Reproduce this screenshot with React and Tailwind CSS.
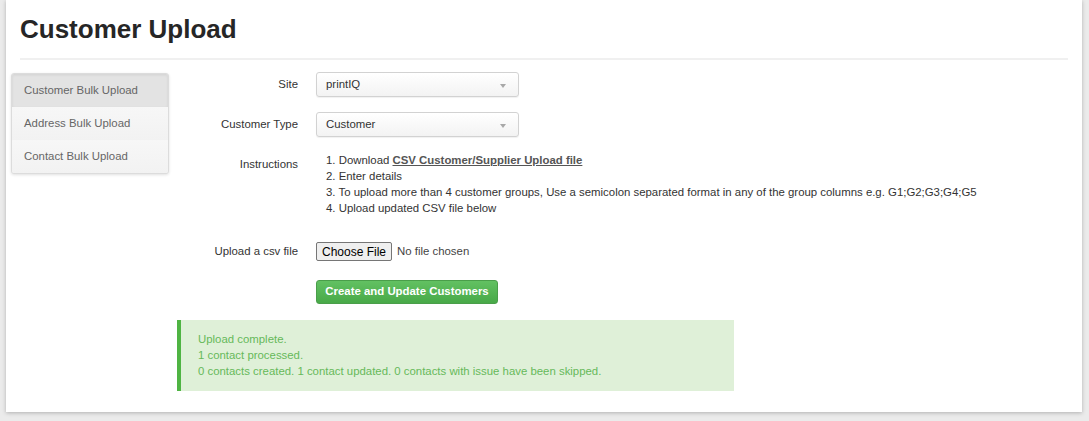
const Select = ({ value }) => (
  <div className="relative flex h-[25px] w-[203px] items-center rounded-[3px] border border-[#d2d2d2] bg-linear-to-b from-white to-[#f3f3f3] pl-[9px] shadow-[0_1px_1px_rgba(0,0,0,0.06)]">
    <span>{value}</span>
    <span className="absolute right-[12px] top-[11px] h-0 w-0 border-x-[3.5px] border-t-[4px] border-x-transparent border-t-[#a8a8a8]" />
  </div>
);

const Row = ({ label, children, labelClass = "", className = "" }) => (
  <div className={`flex ${className}`}>
    <div className={`w-[121px] shrink-0 text-right ${labelClass}`}>{label}</div>
    <div className="ml-[18px]">{children}</div>
  </div>
);

const SideNav = () => {
  const items = ["Customer Bulk Upload", "Address Bulk Upload", "Contact Bulk Upload"];
  return (
    <div className="mt-[1px] h-fit w-[158px] shrink-0 overflow-hidden rounded-[3px] border border-[#dcdcdc] bg-[#f5f5f5] shadow-[0_1px_3px_rgba(0,0,0,0.12)]">
      {items.map((item, i) => (
        <div
          key={item}
          className={`flex h-[33px] items-center pl-[12px] text-[#666] ${
            i === 0 ? "bg-[#e3e3e3] shadow-[inset_0_1px_3px_rgba(0,0,0,0.08)]" : "bg-linear-to-b from-[#f7f7f7] to-[#f2f2f2]"
          }`}
        >
          {item}
        </div>
      ))}
    </div>
  );
};

export default function App() {
  return (
    <div className="h-screen bg-[#ebebeb] px-[6px] font-['Liberation_Sans',Arial,sans-serif] text-[11.4px] text-[#333]">
      <div className="h-[412px] w-[1076px] bg-white shadow-[0_1px_4px_rgba(0,0,0,0.25)]">
        <div className="px-[14px] pt-[15px]">
          <h1 className="text-[26px] leading-[29px] font-bold text-[#262626]">Customer Upload</h1>
          <div className="mt-[14px] h-[2px] bg-[#f0f0f0]" />
        </div>

        <div className="mt-[12px] flex gap-[8px] pl-[5px]">
          <SideNav />

          <div className="flex flex-col">
            <Row label="Site" labelClass="pt-[4px]">
              <Select value="printIQ" />
            </Row>
            <Row label="Customer Type" labelClass="pt-[4px]" className="mt-[15px]">
              <Select value="Customer" />
            </Row>
            <Row label="Instructions" labelClass="pt-[4px]" className="mt-[15px]">
              <div className="pl-[10px] leading-[16px]">
                <div>
                  1. Download{" "}
                  <a href="#" className="font-bold text-[#555] underline">
                    CSV Customer/Supplier Upload file
                  </a>
                </div>
                <div>2. Enter details</div>
                <div>3. To upload more than 4 customer groups, Use a semicolon separated format in any of the group columns e.g. G1;G2;G3;G4;G5</div>
                <div>4. Upload updated CSV file below</div>
              </div>
            </Row>
            <Row label="Upload a csv file" labelClass="pt-[1px]" className="mt-[26px]">
              <div className="flex items-center">
                <button className="h-[19px] rounded-[2px] border border-[#767676] bg-[#efefef] px-[5px] text-[12px] leading-[16px] text-black">
                  Choose File
                </button>
                <span className="ml-[5px] text-[#444]">No file chosen</span>
              </div>
            </Row>
            <Row label="" className="mt-[19px]">
              <button className="h-[24px] w-[182px] rounded-[3px] border border-[#4a9e4a] bg-linear-to-b from-[#62c162] to-[#48a948] font-bold text-white">
                Create and Update Customers
              </button>
            </Row>

            <div className="mt-[16px] w-[557px] border-l-[4px] border-[#4fb443] bg-[#dff0d8] pt-[11px] pb-[12px] pl-[17px] leading-[16px] text-[#66b95a]">
              <div>Upload complete.</div>
              <div>1 contact processed.</div>
              <div>0 contacts created. 1 contact updated. 0 contacts with issue have been skipped.</div>
            </div>
          </div>
        </div>
      </div>
    </div>
  );
}
